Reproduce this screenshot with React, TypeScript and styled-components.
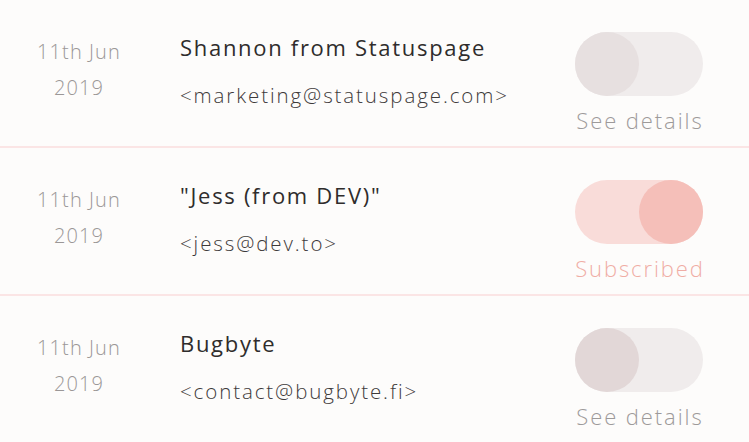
import React from 'react';
import styled, { createGlobalStyle } from 'styled-components';

const GlobalStyle = createGlobalStyle`
  html, body {
    margin: 0;
    padding: 0;
    background: #fdfcfb;
    font-family: "Open Sans", Lato, sans-serif;
  }
`;

const List = styled.ul`
  list-style: none;
  margin: 0;
  padding: 0;
  width: 749px;
  height: 442px;
  overflow: hidden;
`;

const Row = styled.li`
  display: flex;
  height: 146px;
  border-bottom: 2px solid #fbe5e5;
`;

const DateCol = styled.div`
  width: 158px;
  padding-top: 34px;
  text-align: center;
  font-size: 20px;
  font-weight: 300;
  line-height: 36px;
  letter-spacing: 1.1px;
  color: #9b9797;
`;

const Info = styled.div`
  flex: 1;
  padding-top: 30px;
  padding-left: 22px;
`;

const Name = styled.div`
  font-size: 22px;
  line-height: 34px;
  letter-spacing: 1.7px;
  color: #2f2c2c;
`;

const Email = styled.div`
  margin-top: 17px;
  font-size: 20.5px;
  line-height: 28px;
  font-weight: 300;
  letter-spacing: 1.9px;
  color: #3d3a3a;
`;

const Control = styled.div`
  display: flex;
  flex-direction: column;
  align-items: center;
  width: 128px;
  padding-top: 32px;
  margin-right: 46px;
`;

const Track = styled.div<{ $on: boolean }>`
  display: flex;
  flex-shrink: 0;
  justify-content: ${(p) => (p.$on ? 'flex-end' : 'flex-start')};
  width: 128px;
  height: 64px;
  border-radius: 32px;
  background: ${(p) => (p.$on ? '#f9dcd9' : '#f0ecec')};
`;

const Knob = styled.div<{ $tone: string }>`
  width: 64px;
  height: 64px;
  border-radius: 50%;
  background: ${(p) => p.$tone};
`;

const Label = styled.div<{ $on: boolean }>`
  margin-top: 9px;
  padding-left: 1.9px;
  font-size: 22px;
  line-height: 30px;
  font-weight: 300;
  letter-spacing: 1.9px;
  white-space: nowrap;
  color: ${(p) => (p.$on ? '#f0ada5' : '#9d9a9a')};
`;

const senders = [
  { name: 'Shannon from Statuspage', email: '<marketing@statuspage.com>', on: false, knob: '#e7e0e0' },
  { name: '"Jess (from DEV)"', email: '<jess@dev.to>', on: true, knob: '#f5bfb9' },
  { name: 'Bugbyte', email: '<contact@bugbyte.fi>', on: false, knob: '#e2d7d7' },
];

export default function App() {
  return (
    <>
      <GlobalStyle />
      <List>
        {senders.map((s) => (
          <Row key={s.email}>
            <DateCol>
              11th Jun
              <br />
              2019
            </DateCol>
            <Info>
              <Name>{s.name}</Name>
              <Email>{s.email}</Email>
            </Info>
            <Control>
              <Track $on={s.on}>
                <Knob $tone={s.knob} />
              </Track>
              <Label $on={s.on}>{s.on ? 'Subscribed' : 'See details'}</Label>
            </Control>
          </Row>
        ))}
      </List>
    </>
  );
}
